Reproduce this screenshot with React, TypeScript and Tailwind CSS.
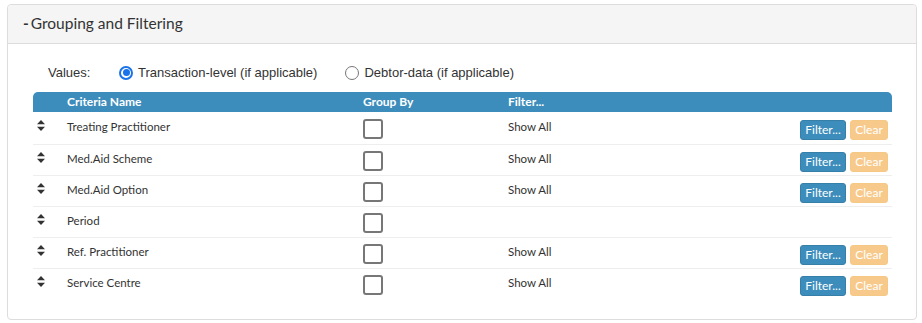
import { useState } from "react";

const rows = [
  { name: "Treating Practitioner", filter: true },
  { name: "Med.Aid Scheme", filter: true },
  { name: "Med.Aid Option", filter: true },
  { name: "Period", filter: false },
  { name: "Ref. Practitioner", filter: true },
  { name: "Service Centre", filter: true },
];

function SortIcon() {
  return (
    <svg width="8" height="11" viewBox="0 0 8 11" className="text-[#333]">
      <path d="M4 0 L8 4.3 H0 Z" fill="currentColor" />
      <path d="M4 11 L8 6.7 H0 Z" fill="currentColor" />
    </svg>
  );
}

function Radio({ checked, label, onClick }: { checked: boolean; label: string; onClick: () => void }) {
  return (
    <label className="flex items-center gap-[5px] cursor-pointer" onClick={onClick}>
      {checked ? (
        <span className="flex h-[14px] w-[14px] items-center justify-center rounded-full border-2 border-[#1a73e8] bg-white">
          <span className="h-[7px] w-[7px] rounded-full bg-[#1a73e8]" />
        </span>
      ) : (
        <span className="h-[14px] w-[14px] rounded-full border border-[#767676] bg-white" />
      )}
      <span>{label}</span>
    </label>
  );
}

export default function App() {
  const [mode, setMode] = useState("tx");
  return (
    <div className="h-[323px] w-[922px] bg-white pl-[7px] pr-[5px] pt-[4px] [font-family:Lato,'Liberation_Sans',sans-serif]">
      <div className="h-[316px] rounded-[4px] border border-[#ddd] bg-white">
        <div className="flex h-[39px] items-center rounded-t-[4px] border-b border-[#ddd] bg-[#f5f5f5] pl-[15px] text-[15.5px] text-[#333]">
          <span className="mr-[2px] font-bold">-</span>
          <span>Grouping and Filtering</span>
        </div>
        <div className="px-[25px] pt-[19px]">
          <div className="flex items-center pl-[15px] text-[13px] text-[#333] [font-family:'Liberation_Sans',Arial,sans-serif]">
            <span className="w-[71px]">Values:</span>
            <Radio checked={mode === "tx"} label="Transaction-level (if applicable)" onClick={() => setMode("tx")} />
            <span className="w-[28px]" />
            <Radio checked={mode === "debtor"} label="Debtor-data (if applicable)" onClick={() => setMode("debtor")} />
          </div>
          <div className="mt-[9px] w-[859px]">
            <div className="grid h-[20px] grid-cols-[34px_296px_145px_1fr] items-center rounded-t-[5px] bg-[#3c8dbc] text-[12px] font-bold text-white">
              <span />
              <span>Criteria Name</span>
              <span>Group By</span>
              <span>Filter...</span>
            </div>
            {rows.map((r, i) => (
              <div
                key={r.name}
                className={`grid grid-cols-[34px_296px_145px_1fr] text-[11.5px] text-[#333] ${i === 0 ? "h-[32px] pt-[1px]" : "h-[31px] border-t border-[#eee]"}`}
              >
                <div className="pl-[4px] pt-[7px]">
                  <SortIcon />
                </div>
                <div className="pt-[5px]">{r.name}</div>
                <div className="pt-[6px]">
                  <span className="block h-[20px] w-[20px] rounded-[3px] border-2 border-[#777] bg-white" />
                </div>
                <div className="flex items-start justify-between pr-[4px] pt-[5px]">
                  <span>{r.filter ? "Show All" : ""}</span>
                  {r.filter && (
                    <div className="mt-[2px] flex gap-[4px]">
                      <button className="h-[20px] w-[46px] rounded-[3px] border border-[#367fa9] bg-[#3c8dbc] text-[12px] text-white">
                        Filter...
                      </button>
                      <button className="h-[20px] w-[38px] rounded-[3px] border border-[#f5c985] bg-[#f7ca8c] text-[12px] text-white">
                        Clear
                      </button>
                    </div>
                  )}
                </div>
              </div>
            ))}
          </div>
        </div>
      </div>
    </div>
  );
}
